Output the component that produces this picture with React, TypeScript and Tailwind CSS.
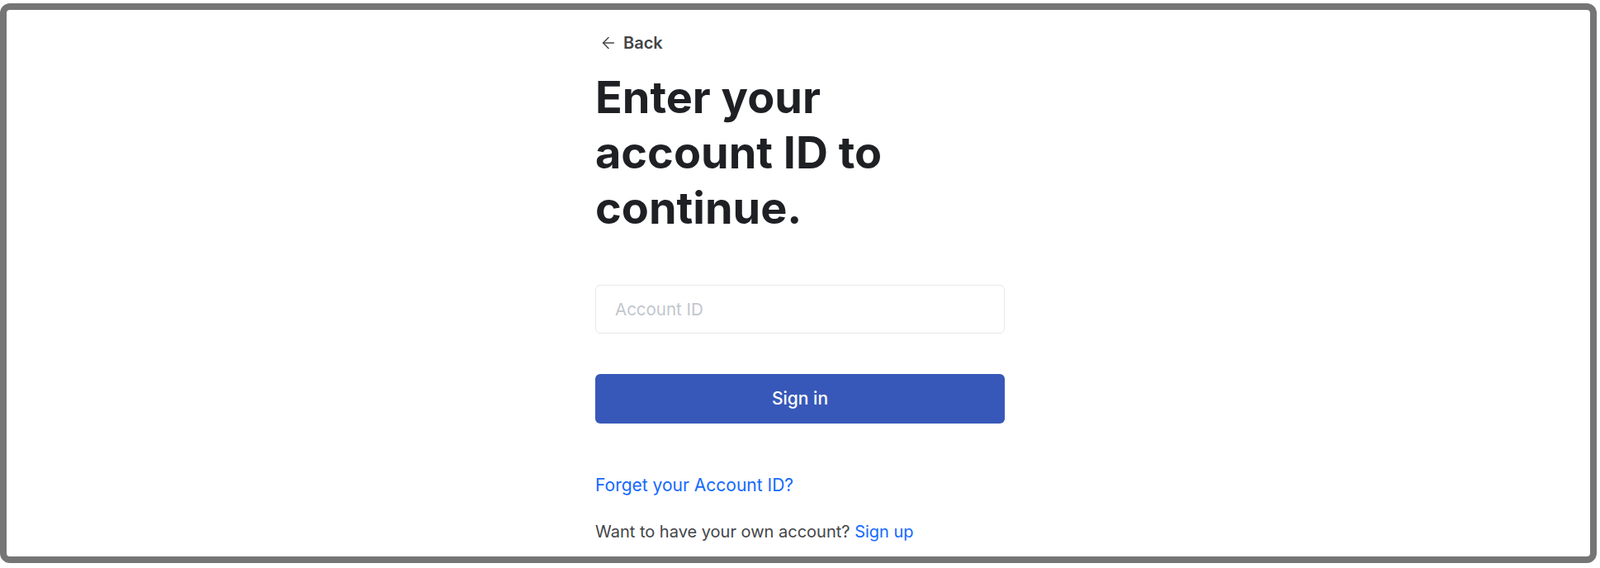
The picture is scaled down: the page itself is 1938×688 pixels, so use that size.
import { ArrowLeft } from "lucide-react";

export default function App() {
  return (
    <div className="h-[688px] bg-white pt-1 pr-1 pb-[6px] font-['Inter',sans-serif]">
      <div className="h-full rounded-[12px] border-[8px] border-[#757575] bg-white pl-1">
        <div className="mx-auto w-[496px] pt-[26px]">
          {/* Back link */}
          <a href="#" className="flex h-7 items-center text-[20px] font-semibold text-[#444549]">
            <ArrowLeft size={22} strokeWidth={1.6} className="ml-[5px]" />
            <span className="ml-[7px]">Back</span>
          </a>

          <h1 className="mt-[18px] max-w-[440px] text-[54px] font-bold leading-[67px] text-[#1f2024]">
            Enter your account ID to continue.
          </h1>

          <input
            type="text"
            placeholder="Account ID"
            className="mt-[60px] block h-[59px] w-full rounded-[6px] border border-[#e6e7ea] px-[23px] text-[20.5px] text-[#1f2024] outline-none placeholder:text-[#c3c6ce]"
          />

          <button className="mt-[49px] block h-[60px] w-full rounded-[6px] bg-[#3758b9] text-[21px] font-medium text-white">
            Sign in
          </button>

          <a href="#" className="mt-[61px] block h-7 leading-7 text-[21px] text-[#1469ff]">
            Forget your Account ID?
          </a>

          <p className="mt-[28px] h-7 leading-7 text-[20px] text-[#444549]">
            Want to have your own account?{" "}
            <a href="#" className="text-[#1469ff]">
              Sign up
            </a>
          </p>
        </div>
      </div>
    </div>
  );
}
